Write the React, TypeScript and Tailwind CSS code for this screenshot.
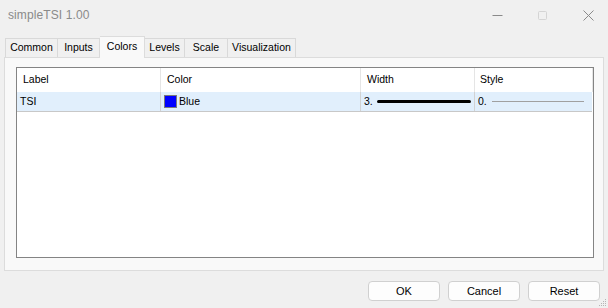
const tabs = [
  { name: 'Common', w: 'w-[53px]' },
  { name: 'Inputs', w: 'w-[42px]' },
  { name: 'Colors', w: 'w-[45px]', active: true },
  { name: 'Levels', w: 'w-[40px]' },
  { name: 'Scale', w: 'w-[43px]' },
  { name: 'Visualization', w: 'w-[68px]' },
];

function TitleBar() {
  return (
    <div className="h-[30px] flex items-center justify-between pl-[8px]">
      <span className="text-[12px] text-[#8a8a8a] tracking-[0.1px]">simpleTSI 1.00</span>
      <div className="flex items-center h-full">
        {/* minimize */}
        <div className="w-[38px] h-full flex items-center justify-center">
          <svg width="11" height="11" viewBox="0 0 11 11">
            <line x1="0.5" y1="5.5" x2="10.5" y2="5.5" stroke="#8a8a8a" strokeWidth="1" />
          </svg>
        </div>
        {/* maximize (disabled) */}
        <div className="w-[52px] h-full flex items-center justify-center">
          <svg width="11" height="11" viewBox="0 0 11 11">
            <rect x="1.5" y="1.5" width="8" height="8" rx="1" fill="none" stroke="#d4d4d4" strokeWidth="1" />
          </svg>
        </div>
        {/* close */}
        <div className="w-[40px] h-full flex items-center justify-center">
          <svg width="11" height="11" viewBox="0 0 11 11">
            <path d="M0.5 0.5 L10.5 10.5 M10.5 0.5 L0.5 10.5" stroke="#8a8a8a" strokeWidth="1" />
          </svg>
        </div>
      </div>
    </div>
  );
}

function Tabs() {
  return (
    <div className="flex items-end h-[21px] mt-[6px] pl-[5px] relative z-10">
      {tabs.map((t) =>
        t.active ? (
          <div
            key={t.name}
            className={`${t.w} h-[22px] -mb-px bg-[#f9f9f9] border-t border-r border-[#dcdcdc] flex items-center justify-center text-black pb-[2px]`}
          >
            {t.name}
          </div>
        ) : (
          <div
            key={t.name}
            className={`${t.w} h-[19px] bg-[#f0f0f0] border-t border-r first:border-l border-[#d9d9d9] flex items-center justify-center text-black`}
          >
            {t.name}
          </div>
        )
      )}
    </div>
  );
}

function ListView() {
  return (
    <div className="h-[191px] border border-[#848484] bg-white flex flex-col">
      {/* header */}
      <div className="flex h-[24px] items-center">
        <div className="w-[144px] h-full pl-[6px] flex items-center border-r border-[#e5e5e5]">Label</div>
        <div className="w-[200px] h-full pl-[6px] flex items-center border-r border-[#e5e5e5]">Color</div>
        <div className="w-[114px] h-full pl-[6px] flex items-center border-r border-[#e5e5e5]">Width</div>
        <div className="w-[118px] h-full pl-[5px] flex items-center border-r border-[#e5e5e5]">Style</div>
      </div>
      {/* row */}
      <div className="flex h-[20px] bg-[#e1effc] border-b border-[#c8c8c8] mr-px">
        <div className="w-[144px] h-full pl-[3px] flex items-center border-r border-[#d2d2d2]">TSI</div>
        <div className="w-[200px] h-full pl-[3px] flex items-center gap-[2px] border-r border-[#d2d2d2]">
          <span className="w-[13px] h-[13px] bg-[#0000ff] border border-[#7a7a7a]" />
          <span>Blue</span>
        </div>
        <div className="w-[114px] h-full pl-[3px] flex items-center gap-[4px] border-r border-[#d2d2d2]">
          <span>3.</span>
          <svg width="94" height="5" viewBox="0 0 94 5">
            <line x1="1.5" y1="2.5" x2="92.5" y2="2.5" stroke="#000" strokeWidth="3" strokeLinecap="round" />
          </svg>
        </div>
        <div className="w-[117px] h-full pl-[3px] flex items-center gap-[5px]">
          <span>0.</span>
          <div className="w-[92px] h-px bg-[#a0a0a0]" />
        </div>
      </div>
    </div>
  );
}

export default function App() {
  return (
    <div
      className="w-[608px] h-[308px] bg-[#f0f0f0] flex flex-col text-[10.5px] text-black relative overflow-hidden"
      style={{ fontFamily: '"Liberation Sans", Arial, sans-serif' }}
    >
      <TitleBar />
      <Tabs />
      <div className="mx-[4px] h-[214px] bg-[#f9f9f9] border border-[#dcdcdc] pt-[9px] pl-[11px] pr-[9px]">
        <ListView />
      </div>
      <div className="flex justify-end gap-[8px] pr-[8px] mt-[10px]">
        {['OK', 'Cancel', 'Reset'].map((b) => (
          <button
            key={b}
            className="w-[72px] h-[20px] rounded-[4px] border border-[#d0d0d0] bg-[#fdfdfd] flex items-center justify-center text-[11px] text-black"
          >
            {b}
          </button>
        ))}
      </div>
      {/* resize grip */}
      <svg className="absolute right-[1px] bottom-[1px]" width="8" height="8" viewBox="0 0 8 8">
        <rect x="6" y="0" width="1" height="1" fill="#b5b5b5" />
        <rect x="4" y="2" width="1" height="1" fill="#b5b5b5" />
        <rect x="6" y="2" width="1" height="1" fill="#b5b5b5" />
        <rect x="2" y="4" width="1" height="1" fill="#b5b5b5" />
        <rect x="4" y="4" width="1" height="1" fill="#b5b5b5" />
        <rect x="6" y="4" width="1" height="1" fill="#b5b5b5" />
        <rect x="0" y="6" width="1" height="1" fill="#b5b5b5" />
        <rect x="2" y="6" width="1" height="1" fill="#b5b5b5" />
        <rect x="4" y="6" width="1" height="1" fill="#b5b5b5" />
        <rect x="6" y="6" width="1" height="1" fill="#b5b5b5" />
      </svg>
    </div>
  );
}
